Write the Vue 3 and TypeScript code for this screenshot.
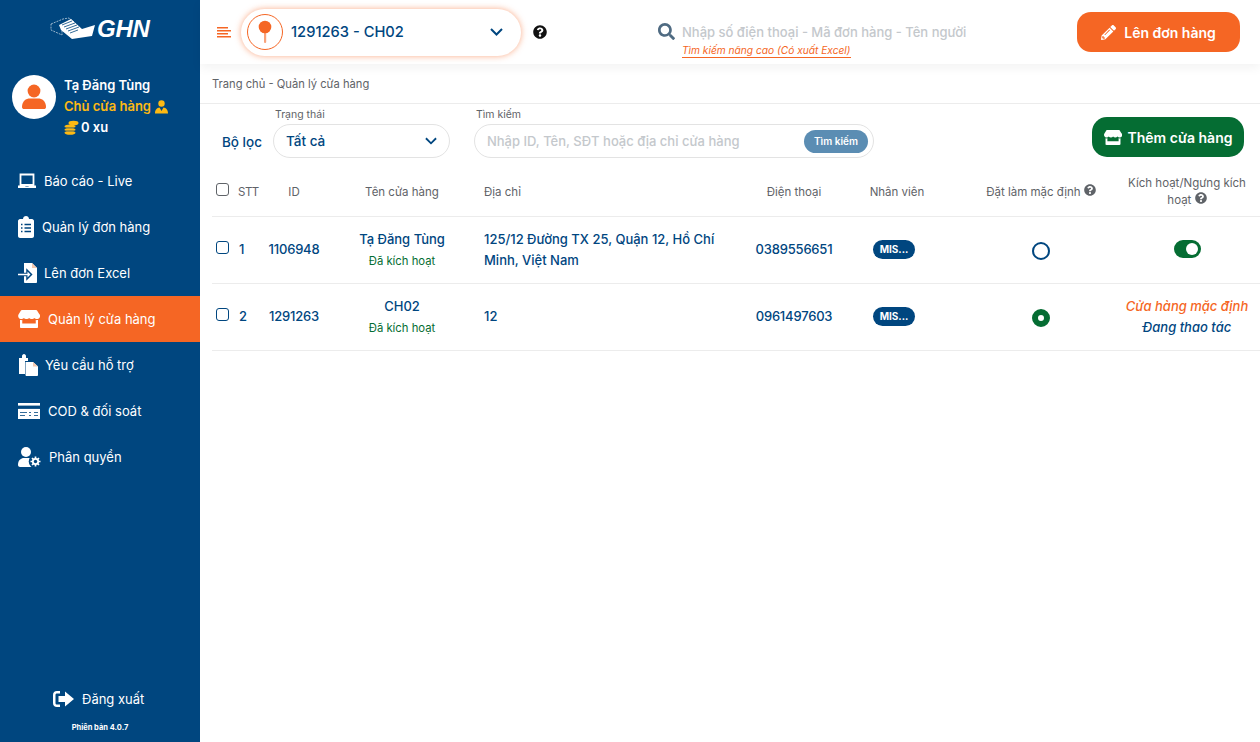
<script setup lang="ts">
const Q = 'M504 256c0 136.997-111.043 248-248 248S8 392.997 8 256C8 119.083 119.043 8 256 8s248 111.083 248 248zM262.655 90c-54.497 0-89.255 22.957-116.549 63.758-3.536 5.286-2.353 12.415 2.715 16.258l34.699 26.31c5.205 3.947 12.621 3.008 16.665-2.122 17.864-22.658 30.113-35.797 57.303-35.797 20.429 0 45.698 13.148 45.698 32.958 0 14.976-12.363 22.667-32.534 33.976C247.128 238.528 216 254.941 216 296v4c0 6.627 5.373 12 12 12h56c6.627 0 12-5.373 12-12v-1.333c0-28.462 83.186-29.647 83.186-106.667 0-58.002-60.165-102-116.531-102zM256 338c-25.365 0-46 20.635-46 46 0 25.364 20.635 46 46 46s46-20.636 46-46c0-25.365-20.635-46-46-46z'
const STORE = 'M602 118.6L537.1 15C531.3 5.7 521 0 510 0H106C95 0 84.7 5.7 78.9 15L14 118.6c-33.9 54.1-3.9 129.3 59.4 137.9 4.6.6 9.2.9 13.7.9 29.9 0 56.4-13.1 74.8-33.4 18.4 20.3 45 33.4 74.8 33.4 29.9 0 56.4-13.1 74.8-33.4 18.4 20.3 45 33.4 74.8 33.4 29.9 0 56.4-13.1 74.8-33.4 18.5 20.3 45 33.4 74.8 33.4 4.6 0 9.1-.3 13.7-.9 63.5-8.5 93.6-83.7 59.6-137.9zM529.5 288c-10 0-19.9-1.5-29.5-3.8V384H116v-99.8c-9.6 2.2-19.5 3.8-29.5 3.8-6 0-12.1-.4-18-1.2-5.6-.8-11.1-2.1-16.4-3.6V480c0 17.7 14.3 32 32 32h448c17.7 0 32-14.3 32-32V283.2c-5.4 1.6-10.8 2.9-16.4 3.6-6.1.8-12.1 1.2-18.2 1.2z'
const SEARCH = 'M505 442.7L405.3 343c-4.5-4.5-10.6-7-17-7H372c27.6-35.3 44-79.7 44-128C416 93.1 322.9 0 208 0S0 93.1 0 208s93.1 208 208 208c48.3 0 92.7-16.4 128-44v16.3c0 6.4 2.5 12.5 7 17l99.7 99.7c9.4 9.4 24.6 9.4 33.9 0l28.3-28.3c9.4-9.4 9.4-24.6.1-34zM208 336c-70.7 0-128-57.2-128-128 0-70.7 57.2-128 128-128 70.7 0 128 57.2 128 128 0 70.7-57.2 128-128 128z'
const PENCIL = 'M497.9 142.1l-46.1 46.1c-4.7 4.7-12.3 4.7-17 0l-111-111c-4.7-4.7-4.7-12.3 0-17l46.1-46.1c18.7-18.7 49.1-18.7 67.9 0l60.1 60.1c18.8 18.7 18.8 49.1 0 67.9zM284.2 99.8L21.6 362.4.4 483.9c-2.9 16.4 11.4 30.6 27.8 27.8l121.5-21.3 262.6-262.6c4.7-4.7 4.7-12.3 0-17l-111-111c-4.8-4.7-12.4-4.7-17.1 0zM124.1 339.9c-5.5-5.5-5.5-14.3 0-19.8l154-154c5.5-5.5 14.3-5.5 19.8 0s5.5 14.3 0 19.8l-154 154c-5.5 5.5-14.3 5.5-19.8 0zM88 424h48v36.3l-64.5 11.3-31.1-31.1L51.7 376H88v48z'

const menu = [
  { key: 'laptop', label: 'Báo cáo - Live', gap: 8 },
  { key: 'clip', label: 'Quản lý đơn hàng', gap: 8 },
  { key: 'file', label: 'Lên đơn Excel', gap: 6 },
  { key: 'store', label: 'Quản lý cửa hàng', gap: 8, active: true },
  { key: 'copy', label: 'Yêu cầu hỗ trợ', gap: 7 },
  { key: 'card', label: 'COD & đối soát', gap: 8 },
  { key: 'cog', label: 'Phân quyền', gap: 8 },
]
const rows = [
  { no: 1, id: '1106948', name: 'Tạ Đăng Tùng', addr: '125/12 Đường TX 25, Quận 12, Hồ Chí Minh, Việt Nam', phone: '0389556651', isDefault: false },
  { no: 2, id: '1291263', name: 'CH02', addr: '12', phone: '0961497603', isDefault: true },
]
</script>

<template>
  <div class="page">
    <aside class="side">
      <div class="logo">
        <svg width="46" height="24" viewBox="0 0 46 24">
          <path d="M1 8 L13 3 L19 2 L24 6 L12 11 L12 19 L1 14 Z" fill="none" stroke="#fff" stroke-width=".6" stroke-dasharray="2 1" />
          <path d="M9 9 L21 3 L32 13 L45 9 L42 20 L22 23 L11 14 Z" fill="#fff" />
          <path d="M12 9 L22 5 M14 11 L25 7 M16 13 L27 9 M18 15 L29 11 M20 17 L28 14" stroke="#00467f" stroke-width=".8" />
        </svg>
        <span class="logo-text">GHN</span>
      </div>
      <div class="user">
        <div class="avatar">
          <svg width="24" height="26" viewBox="0 0 24 26" fill="#f56624">
            <circle cx="12" cy="7" r="6.4" />
            <path d="M0 23 C0 17 4 14.500 8 14.500 H16 C20 14.500 24 17 24 23 C24 24.500 23 25 22 25 H2 C1 25 0 24.500 0 23Z" />
          </svg>
        </div>
        <div class="user-info">
          <div class="uname">Tạ Đăng Tùng</div>
          <div class="urole">Chủ cửa hàng
            <svg width="13" height="14" viewBox="0 0 13 14" fill="#fdb913">
              <circle cx="6.500" cy="3.500" r="3.200" />
              <path d="M0 13.500 C0 9.500 2 8 4.500 7.500 L6.500 11 L8.500 7.500 C11 8 13 9.500 13 13.500Z" />
            </svg>
          </div>
          <div class="uxu">
            <svg width="15" height="15" viewBox="0 0 15 15" fill="#fdb913">
              <ellipse cx="9.500" cy="3" rx="5" ry="2.300" />
              <ellipse cx="6" cy="6.500" rx="5.500" ry="2.100" />
              <ellipse cx="6" cy="9.700" rx="5.500" ry="2.100" />
              <ellipse cx="6" cy="12.700" rx="5.500" ry="2.100" />
              <path d="M1 7.900 H11 M1 11 H11" stroke="#00467f" stroke-width=".7" />
            </svg>
            <span>0 xu</span>
          </div>
        </div>
      </div>
      <nav class="nav">
        <div v-for="m in menu" :key="m.key" class="nav-item" :class="{ active: m.active }">
          <svg v-if="m.key === 'laptop'" class="ni" width="18" height="16" viewBox="0 0 18 16">
            <path d="M2.500 1.500 H15.500 V12 H2.500Z" fill="none" stroke="#fff" stroke-width="1.800" />
            <path d="M0 12.500 H7 L7.500 13.500 H10.500 L11 12.500 H18 V15 H0Z" fill="#fff" />
          </svg>
          <svg v-else-if="m.key === 'clip'" class="ni" width="16" height="22" viewBox="0 0 16 22">
            <path d="M2 3 H5 C5 1 6.500 0 8 0 C9.500 0 11 1 11 3 H14 C15 3 16 4 16 5 V20 C16 21 15 22 14 22 H2 C1 22 0 21 0 20 V5 C0 4 1 3 2 3Z" fill="#fff" />
            <path d="M3 8.500 H4.500 M6.500 8.500 H13 M3 12 H4.500 M6.500 12 H13 M3 15.500 H4.500 M6.500 15.500 H13" stroke="#00467f" stroke-width="1.500" />
          </svg>
          <svg v-else-if="m.key === 'file'" class="ni" width="20" height="20" viewBox="0 0 20 20">
            <path d="M6 0 H14 L19 5 V19 C19 19.500 18.500 20 18 20 H7 C6.500 20 6 19.500 6 19Z" fill="#fff" />
            <path d="M14 0 V5 H19Z" fill="#f4c9b0" />
            <path d="M0 10.500 H9 V7 L13.500 11.500 L9 16 V12.500 H0Z" fill="#00467f" stroke="#00467f" stroke-width="1.500" />
            <path d="M0 10.800 H9.500 V8.500 L12.500 11.500 L9.500 14.500 V12.200 H0Z" fill="#fff" />
          </svg>
          <svg v-else-if="m.key === 'store'" class="ni" width="22" height="18" viewBox="0 0 616 512" fill="#fff">
            <path :d="STORE" />
          </svg>
          <svg v-else-if="m.key === 'copy'" class="ni" width="20" height="22" viewBox="0 0 20 22">
            <path d="M1 4 H4 V2 C4 1 5 0 6 0 C7 0 8 1 8 2 V4 H10 V7 H7 V20 H1Z" fill="#fff" />
            <path d="M7.500 8 H15 L20 12.500 V21 C20 21.500 19.500 22 19 22 H8.500 C8 22 7.500 21.500 7.500 21Z" fill="#fff" />
            <path d="M15 8 V12.500 H20Z" fill="#f4c9b0" />
          </svg>
          <svg v-else-if="m.key === 'card'" class="ni" width="22" height="16" viewBox="0 0 22 16">
            <path d="M0 0 H22 V16 H0Z" fill="#fff" />
            <path d="M0 3 H22 V5.500 H0Z M2 9.500 H9 M2 12.500 H7 M11 9.500 H13 M11 12.500 H13 M16 9.500 H20 M16 12.500 H20" fill="#00467f" stroke="#00467f" stroke-width=".8" />
          </svg>
          <svg v-else class="ni" width="23" height="20" viewBox="0 0 23 20" fill="#fff">
            <circle cx="8" cy="5" r="5" />
            <path d="M0 18 C0 13 3 11 6 11 H11 C13 11 14 12 14 13 V19 C14 19.500 13.500 20 13 20 H2 C1 20 0 19 0 18Z" />
            <circle cx="17.500" cy="14.500" r="6.800" fill="#00467f" />
            <circle cx="17.500" cy="14.500" r="3.600" />
            <path d="M17.500 9.500 V19.500 M12.500 14.500 H22.500 M14 11 L21 18 M21 11 L14 18" stroke="#fff" stroke-width="1.700" />
            <circle cx="17.500" cy="14.500" r="1.700" fill="#00467f" />
          </svg>
          <span :style="{ marginLeft: m.gap + 'px' }">{{ m.label }}</span>
        </div>
      </nav>
      <div class="logout">
        <svg width="21" height="16" viewBox="0 0 21 16" fill="#fff">
          <path d="M7 0 H4 C1.500 0 0 1.500 0 4 V12 C0 14.500 1.500 16 4 16 H7 V13.500 H4 C3 13.500 2.500 13 2.500 12 V4 C2.500 3 3 2.500 4 2.500 H7Z" />
          <path d="M12 0.500 L21 8 L12 15.500 V11 H5.500 V5 H12Z" />
        </svg>
        <span>Đăng xuất</span>
      </div>
      <div class="version">Phiên bản 4.0.7</div>
    </aside>

    <main class="main">
      <header class="top">
        <svg class="burger" width="15" height="11" viewBox="0 0 15 11" fill="none" stroke="#f56624" stroke-width="1.500">
          <path d="M0 .800 H11 M0 3.800 H14 M0 6.800 H11 M0 9.800 H14" />
        </svg>
        <div class="shop">
          <div class="pin">
            <svg width="14" height="24" viewBox="0 0 14 24">
              <rect x="6" y="11" width="2.200" height="12" rx="1" fill="#f9a27a" />
              <circle cx="7" cy="7" r="6.300" fill="#f56624" />
            </svg>
          </div>
          <span class="shop-name">1291263 - CH02</span>
          <svg class="chev" width="13" height="8" viewBox="0 0 13 8" fill="none" stroke="#00467f" stroke-width="2">
            <path d="M1 1 L6.500 6.500 L12 1" />
          </svg>
        </div>
        <svg class="help" width="14" height="14" viewBox="0 0 512 512" fill="#111"><path :d="Q" /></svg>
        <div class="search">
          <svg class="s-ico" width="17" height="17" viewBox="0 0 512 512" fill="#4f6b82"><path :d="SEARCH" /></svg>
          <div class="search-col">
            <div class="search-ph">Nhập số điện thoại - Mã đơn hàng - Tên người</div>
            <a class="search-adv">Tìm kiếm nâng cao (Có xuất Excel)</a>
          </div>
        </div>
        <button class="btn-order">
          <svg width="15" height="15" viewBox="0 0 512 512" fill="#fff"><path :d="PENCIL" /></svg>
          <span>Lên đơn hàng</span>
        </button>
      </header>

      <div class="crumb">Trang chủ - Quản lý cửa hàng</div>

      <section class="filter">
        <span class="f-label">Bộ lọc</span>
        <div class="f-field">
          <label>Trạng thái</label>
          <div class="select">
            <span>Tất cả</span>
            <svg width="12" height="8" viewBox="0 0 13 8" fill="none" stroke="#00467f" stroke-width="2"><path d="M1 1 L6.500 6.500 L12 1" /></svg>
          </div>
        </div>
        <div class="f-field f-search">
          <label>Tìm kiếm</label>
          <div class="input">
            <span class="ph">Nhập ID, Tên, SĐT hoặc địa chỉ cửa hàng</span>
            <span class="go">Tìm kiếm</span>
          </div>
        </div>
        <button class="btn-add">
          <svg width="18" height="15" viewBox="0 0 616 512" fill="#fff"><path :d="STORE" /></svg>
          <span>Thêm cửa hàng</span>
        </button>
      </section>

      <section class="table">
        <div class="row head">
          <div class="c-stt"><i class="check"></i><span class="stt-h">STT</span></div>
          <div class="c">ID</div>
          <div class="c">Tên cửa hàng</div>
          <div class="c-addr">Địa chỉ</div>
          <div class="c">Điện thoại</div>
          <div class="c">Nhân viên</div>
          <div class="c c-def">Đặt làm mặc định
            <svg width="12" height="12" viewBox="0 0 512 512" fill="#5f6368"><path :d="Q" /></svg>
          </div>
          <div class="c c-act">Kích hoạt/Ngưng kích hoạt
            <svg width="12" height="12" viewBox="0 0 512 512" fill="#5f6368"><path :d="Q" /></svg>
          </div>
        </div>
        <div v-for="r in rows" :key="r.no" class="row body">
          <div class="c-stt up"><i class="check"></i><span>{{ r.no }}</span></div>
          <div class="c up num">{{ r.id }}</div>
          <div class="c name">
            <div class="nm">{{ r.name }}</div>
            <div class="st">Đã kích hoạt</div>
          </div>
          <div class="c-addr addr" :class="{ up: r.isDefault }">{{ r.addr }}</div>
          <div class="c up num">{{ r.phone }}</div>
          <div class="c up"><span class="badge">MIS...</span></div>
          <div class="c c-def up">
            <i class="radio" :class="{ on: r.isDefault }"></i>
          </div>
          <div class="c c-act">
            <template v-if="r.isDefault">
              <div class="def-a">Cửa hàng mặc định</div>
              <div class="def-b">Đang thao tác</div>
            </template>
            <i v-else class="toggle"></i>
          </div>
        </div>
      </section>
    </main>
  </div>
</template>

<style>
html, body { margin: 0; background: #fff; }
</style>

<style scoped>
.page {
  display: flex;
  height: 742px;
  overflow: hidden;
  font-family: Inter, "Open Sans", sans-serif;
  color: #00467f;
}
.side {
  width: 200px;
  flex: none;
  background: #00467f;
  color: #fff;
  display: flex;
  flex-direction: column;
}
.logo {
  height: 64px;
  padding: 16px 0 0 50px;
  box-sizing: border-box;
  display: flex;
  align-items: flex-start;
}
.logo-text {
  font: italic 800 24px/25px "Liberation Sans", sans-serif;
  margin-left: 1px;
  letter-spacing: -.2px;
}
.user {
  display: flex;
  padding: 11px 0 0 12px;
  height: 85px;
  box-sizing: border-box;
}
.avatar {
  width: 44px;
  height: 44px;
  border-radius: 50%;
  background: #fff;
  display: flex;
  align-items: center;
  justify-content: center;
}
.user-info { margin-left: 8px; font-size: 13px; font-weight: 600; line-height: 21px; }
.urole { color: #fdb913; display: flex; align-items: center; gap: 4px; }
.uxu { display: flex; align-items: center; gap: 2px; }
.nav { margin-top: 9px; }
.nav-item {
  height: 46px;
  display: flex;
  align-items: center;
  padding-left: 18px;
  font-size: 13px;
  color: #fff;
}
.nav-item.active { background: #f56624; }
.ni { flex: none; }
.logout {
  margin-top: auto;
  display: flex;
  align-items: center;
  padding-left: 53px;
  gap: 8px;
  font-size: 13px;
}
.version {
  text-align: center;
  font-size: 7.500px;
  font-weight: 700;
  margin: 16px 0 9px;
  line-height: 10px;
}
.main { flex: 1; min-width: 0; }
.top {
  height: 64px;
  display: flex;
  align-items: center;
  background: #fff;
  box-shadow: 0 4px 10px rgba(0, 0, 0, .05);
  position: relative;
}
.burger { margin-left: 17px; }
.shop {
  margin-left: 9px;
  width: 280px;
  height: 47px;
  border-radius: 24px;
  background: #fff;
  box-shadow: 0 0 6px rgba(245, 102, 36, .55);
  display: flex;
  align-items: center;
  box-sizing: border-box;
  padding-left: 6px;
}
.pin {
  width: 36px;
  height: 36px;
  box-sizing: border-box;
  border: 1.500px solid #f56624;
  border-radius: 50%;
  display: flex;
  justify-content: center;
  align-items: center;
}
.shop-name { margin-left: 8px; font-size: 14.700px; font-weight: 500; flex: 1; }
.chev { margin-right: 18px; }
.help { margin-left: 12px; }
.search {
  margin-left: 111px;
  display: flex;
  gap: 7px;
  align-items: flex-start;
  align-self: flex-start;
  margin-top: 23px;
}
.s-ico { flex: none; }
.search-col { width: 284px; }
.search-ph { font-size: 13px; color: #c4c8cc; white-space: nowrap; overflow: hidden; font-weight: 500; line-height: 18px; }
.search-adv {
  display: block;
  width: fit-content;
  margin-top: 3px;
  font-size: 10.200px;
  font-style: italic;
  color: #f56624;
  border-bottom: 1px solid #f56624;
  line-height: 12px;
  padding-bottom: 1px;
}
.btn-order {
  margin-left: auto;
  margin-right: 20px;
  width: 163px;
  height: 40px;
  border: 0;
  border-radius: 14px;
  background: #f56624;
  color: #fff;
  font: 600 14px Inter, sans-serif;
  display: flex;
  align-items: center;
  justify-content: center;
  gap: 8px;
}
.crumb {
  height: 40px;
  box-sizing: border-box;
  padding: 12px 0 0 12px;
  font-size: 11.200px;
  line-height: 16px;
  color: #5f6368;
  border-bottom: 1px solid #ececec;
}
.filter {
  height: 67px;
  display: flex;
  align-items: flex-start;
  padding: 4px 16px 0 22px;
  box-sizing: border-box;
}
.f-label { margin-top: 26px; font-size: 13.500px; font-weight: 500; }
.f-field { margin-left: 11px; display: flex; flex-direction: column; }
.f-field label { font-size: 10.500px; color: #5f6368; line-height: 14px; margin: 0 0 2px 2px; }
.select {
  width: 177px;
  height: 34px;
  box-sizing: border-box;
  border: 1px solid #e3e3e3;
  border-radius: 17px;
  padding: 0 12px;
  display: flex;
  align-items: center;
  justify-content: space-between;
  font-size: 13.500px;
  font-weight: 500;
}
.f-search { margin-left: 24px; }
.input {
  width: 400px;
  height: 34px;
  box-sizing: border-box;
  border: 1px solid #e3e3e3;
  border-radius: 17px;
  padding: 0 5px 0 12px;
  display: flex;
  align-items: center;
  justify-content: space-between;
}
.ph { font-size: 13px; color: #c4c8cc; font-weight: 500; }
.go {
  width: 64px;
  height: 23px;
  border-radius: 12px;
  background: #5b8db3;
  color: #fff;
  font-size: 10px;
  font-weight: 600;
  display: flex;
  align-items: center;
  justify-content: center;
}
.btn-add {
  margin-left: auto;
  width: 152px;
  height: 40px;
  margin-top: 9px;
  border: 0;
  border-radius: 15px;
  background: #056d33;
  color: #fff;
  font: 600 14px Inter, sans-serif;
  display: flex;
  align-items: center;
  justify-content: center;
  gap: 6px;
}
.table { padding-left: 12px; }
.row {
  display: grid;
  grid-template-columns: 56px 52px 164px 260px 100px 106px 164px 146px;
  align-items: center;
  border-bottom: 1px solid #ececec;
}
.head {
  height: 45px;
  font-size: 11.500px;
  color: #5f6368;
}
.head > div { padding-bottom: 4px; }
.stt-h { letter-spacing: -.5px; }
.body { height: 66px; font-size: 13px; font-weight: 500; }
.up { padding-bottom: 2px; }
.num { letter-spacing: -.2px; }
.c { text-align: center; }
.c-stt { display: flex; align-items: center; gap: 10px; padding-left: 4px; }
.head .c-stt { gap: 9px; }
.check {
  display: block;
  flex: none;
  width: 11px;
  height: 11px;
  border: 1.500px solid #00467f;
  border-radius: 3px;
  margin-top: -4px;
}
.head .check { border-color: #5f6368; }
.c-addr { padding-right: 20px; }
.addr { line-height: 21px; }
.name { padding-top: 2px; }
.nm { line-height: 20px; }
.st { font-size: 11.300px; color: #056d33; line-height: 24px; font-weight: 400; }
.badge {
  display: inline-block;
  width: 42px;
  height: 19px;
  margin-right: 6px;
  border-radius: 10px;
  background: #00467f;
  color: #fff;
  font-size: 10px;
  line-height: 19px;
  font-weight: 700;
}
.c-def { padding-left: 18px; box-sizing: border-box; }
.c-act { padding-left: 8px; padding-right: 8px; line-height: 17px; }
.radio {
  display: inline-block;
  width: 18px;
  height: 18px;
  box-sizing: border-box;
  border: 2px solid #00467f;
  border-radius: 50%;
  vertical-align: middle;
  margin-top: 4px;
}
.radio.on { border: 6px solid #056d33; background: #fff; }
.toggle {
  display: inline-block;
  width: 27px;
  height: 18px;
  margin-top: 2px;
  border-radius: 9px;
  background: #056d33;
  position: relative;
}
.toggle::after {
  content: "";
  position: absolute;
  right: 3px;
  top: 3px;
  width: 12px;
  height: 12px;
  border-radius: 50%;
  background: #fff;
}
.def-a { font-size: 13px; font-style: italic; color: #f56624; line-height: 21px; white-space: nowrap; }
.def-b { font-size: 13px; font-style: italic; line-height: 21px; }
</style>
